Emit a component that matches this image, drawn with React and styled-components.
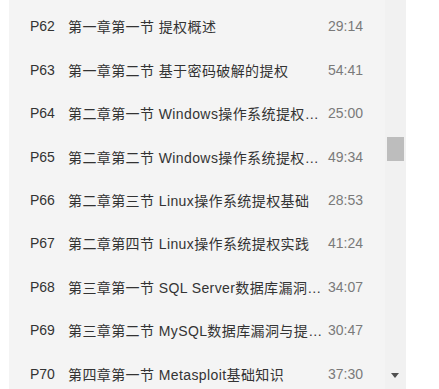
import React from "react";
import styled, { createGlobalStyle } from "styled-components";

const Global = createGlobalStyle`
  html, body { margin: 0; padding: 0; background: #fff; }
  body { font-family: "Liberation Sans", Arial, "Noto Sans CJK SC", sans-serif; }
`;

const Page = styled.div`
  display: flex;
  padding-left: 9px;
  height: 389px;
  overflow: hidden;
`;

const Panel = styled.div`
  width: 376px;
  background: #f4f4f4;
  padding: 4.8px 20px 0 21px;
  box-sizing: border-box;
  overflow: hidden;
`;

const Row = styled.div`
  display: grid;
  grid-template-columns: 38px 258px 2px 37px;
  align-items: center;
  height: 43.4px;
  font-size: 14px;
  color: #333;
`;

const Num = styled.span`
  grid-column: 1;
`;

const Title = styled.span`
  grid-column: 2;
  white-space: nowrap;
  overflow: hidden;
  text-overflow: ellipsis;
  letter-spacing: 0.4px;
`;

const Time = styled.span`
  grid-column: 4;
  color: #7a7a7a;
  white-space: nowrap;
`;

const Track = styled.div`
  position: relative;
  width: 21px;
  background: #f1f1f1;
`;

const Thumb = styled.div`
  position: absolute;
  left: 2px;
  top: 137px;
  width: 17px;
  height: 24px;
  background: #bdbdbd;
`;

const Arrow = styled.div`
  position: absolute;
  left: 6px;
  top: 373px;
  width: 0;
  height: 0;
  border-left: 4.5px solid transparent;
  border-right: 4.5px solid transparent;
  border-top: 5px solid #505050;
`;

const items = [
  ["P62", "第一章第一节 提权概述", "29:14"],
  ["P63", "第一章第二节 基于密码破解的提权", "54:41"],
  ["P64", "第二章第一节 Windows操作系统提权基础", "25:00"],
  ["P65", "第二章第二节 Windows操作系统提权实践", "49:34"],
  ["P66", "第二章第三节 Linux操作系统提权基础", "28:53"],
  ["P67", "第二章第四节 Linux操作系统提权实践", "41:24"],
  ["P68", "第三章第一节 SQL Server数据库漏洞利用与提权", "34:07"],
  ["P69", "第三章第二节 MySQL数据库漏洞与提权实践", "30:47"],
  ["P70", "第四章第一节 Metasploit基础知识", "37:30"],
];

export default function App() {
  return (
    <>
      <Global />
      <Page>
        <Panel>
          {items.map(([n, t, d]) => (
            <Row key={n}>
              <Num>{n}</Num>
              <Title>{t}</Title>
              <Time>{d}</Time>
            </Row>
          ))}
        </Panel>
        <Track>
          <Thumb />
          <Arrow />
        </Track>
      </Page>
    </>
  );
}
